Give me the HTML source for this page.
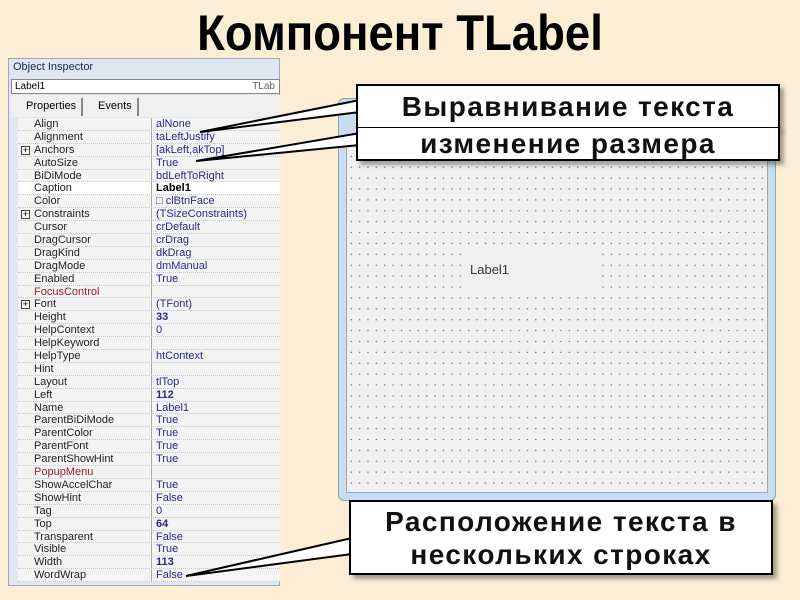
<!DOCTYPE html>
<html><head><meta charset="utf-8">
<style>
*{margin:0;padding:0;box-sizing:border-box}
body{width:800px;height:600px;overflow:hidden;background:#fbeed5;font-family:"Liberation Sans",sans-serif;position:relative}
.title{position:absolute;left:0;width:800px;top:4px;text-align:center;font-weight:bold;font-size:50px;color:#000;transform:scaleX(0.91)}
.oi{position:absolute;left:8px;top:58px;width:272px;height:528px;background:#dfe8f2;border:1px solid #9aaabb}
.oih{position:absolute;left:4px;top:2px;font-size:11px;color:#1b2a40}
.sel{position:absolute;left:11px;top:79px;width:269px;height:15px;background:#fff;border:1px solid #888;font-size:10px;padding-left:3px;line-height:13px}
.sel span{position:absolute;right:4px;color:#666}
.tabs{position:absolute;left:11px;top:95px;width:269px;height:22px;background:#f0f0f0}
.tab{position:absolute;top:3px;font-size:11px;height:18px;line-height:16px;border-right:2px solid #888;padding:0 5px}
.grid{position:absolute;left:18px;top:118px;width:262px}
.r{height:12.9px;font-size:11px;line-height:12.9px;position:relative;border-bottom:1px dotted #c8c8c8;background:#f4f4f4}
.r .n{position:absolute;left:16px;color:#222}
.r .v{position:absolute;left:138px;color:#2a2a88}
.r:after{content:"";position:absolute;left:133px;top:0;bottom:0;border-left:1px solid #aaa}
.b{font-weight:bold}
.red{color:#a01c2c!important}
.pl{position:absolute;left:3px;top:2px;width:9px;height:9px;border:1px solid #444;font-size:9px;line-height:7px;text-align:center}
.form{position:absolute;left:338px;top:98px;width:438px;height:403px;background:#c9dcf0;border:1px solid #8aa;border-radius:6px}
.fi{position:absolute;left:7px;top:40px;right:7px;bottom:7px;background-color:#f0f0f0;background-image:radial-gradient(circle,#777 0.6px,transparent 0.9px);background-size:8.4px 10.9px;border:1px solid #9ab}
.lbl{position:absolute;left:116px;top:106px;width:136px;height:50px;background:#f0f0f0;font-size:13px;color:#333;padding:16px 0 0 7px}
.co{position:absolute;background:#fff;border:2px solid #000;text-align:center;font-weight:bold;font-size:28px;letter-spacing:1.4px;color:#111;box-shadow:4px 4px 4px rgba(0,0,0,.35)}
</style></head><body>
<div class="title">Компонент TLabel</div>
<div class="oi"><div class="oih">Object Inspector</div></div>
<div class="sel">Label1<span>TLab</span></div>
<div class="tabs"><div class="tab" style="left:10px">Properties</div><div class="tab" style="left:82px">Events</div></div>
<div class="grid">
<div class="r"><span class="n">Align</span><span class="v">alNone</span></div>
<div class="r"><span class="n">Alignment</span><span class="v">taLeftJustify</span></div>
<div class="r"><span class="pl">+</span><span class="n">Anchors</span><span class="v">[akLeft,akTop]</span></div>
<div class="r"><span class="n">AutoSize</span><span class="v">True</span></div>
<div class="r"><span class="n">BiDiMode</span><span class="v">bdLeftToRight</span></div>
<div class="r" style="background:#fff"><span class="n">Caption</span><span class="v b" style="color:#000">Label1</span></div>
<div class="r"><span class="n">Color</span><span class="v">&#9633; clBtnFace</span></div>
<div class="r"><span class="pl">+</span><span class="n">Constraints</span><span class="v">(TSizeConstraints)</span></div>
<div class="r"><span class="n">Cursor</span><span class="v">crDefault</span></div>
<div class="r"><span class="n">DragCursor</span><span class="v">crDrag</span></div>
<div class="r"><span class="n">DragKind</span><span class="v">dkDrag</span></div>
<div class="r"><span class="n">DragMode</span><span class="v">dmManual</span></div>
<div class="r"><span class="n">Enabled</span><span class="v">True</span></div>
<div class="r"><span class="n red">FocusControl</span></div>
<div class="r"><span class="pl">+</span><span class="n">Font</span><span class="v">(TFont)</span></div>
<div class="r"><span class="n">Height</span><span class="v b">33</span></div>
<div class="r"><span class="n">HelpContext</span><span class="v">0</span></div>
<div class="r"><span class="n">HelpKeyword</span></div>
<div class="r"><span class="n">HelpType</span><span class="v">htContext</span></div>
<div class="r"><span class="n">Hint</span></div>
<div class="r"><span class="n">Layout</span><span class="v">tlTop</span></div>
<div class="r"><span class="n">Left</span><span class="v b">112</span></div>
<div class="r"><span class="n">Name</span><span class="v">Label1</span></div>
<div class="r"><span class="n">ParentBiDiMode</span><span class="v">True</span></div>
<div class="r"><span class="n">ParentColor</span><span class="v">True</span></div>
<div class="r"><span class="n">ParentFont</span><span class="v">True</span></div>
<div class="r"><span class="n">ParentShowHint</span><span class="v">True</span></div>
<div class="r"><span class="n red">PopupMenu</span></div>
<div class="r"><span class="n">ShowAccelChar</span><span class="v">True</span></div>
<div class="r"><span class="n">ShowHint</span><span class="v">False</span></div>
<div class="r"><span class="n">Tag</span><span class="v">0</span></div>
<div class="r"><span class="n">Top</span><span class="v b">64</span></div>
<div class="r"><span class="n">Transparent</span><span class="v">False</span></div>
<div class="r"><span class="n">Visible</span><span class="v">True</span></div>
<div class="r"><span class="n">Width</span><span class="v b">113</span></div>
<div class="r"><span class="n">WordWrap</span><span class="v">False</span></div>
</div>
<div class="form"><div class="fi"><div class="lbl">Label1</div></div></div>
<svg style="position:absolute;left:0;top:0" width="800" height="600">
<polygon points="200,132 360,112 360,100" fill="#fff" stroke="#000" stroke-width="2"/>
<polygon points="196,161 360,145 360,133" fill="#fff" stroke="#000" stroke-width="2"/>
<polygon points="186,576 352,538 352,554" fill="#fff" stroke="#000" stroke-width="2"/>
</svg>
<div class="co" style="left:356px;top:84px;width:424px;height:45px;line-height:42px">Выравнивание текста</div>
<div class="co" style="left:356px;top:127px;width:424px;height:34px;line-height:32px;border-top:1px solid #000">изменение размера</div>
<div class="co" style="left:349px;top:500px;width:424px;height:75px;line-height:33px;padding-top:3px">Расположение текста в<br>нескольких строках</div>
</body></html>
